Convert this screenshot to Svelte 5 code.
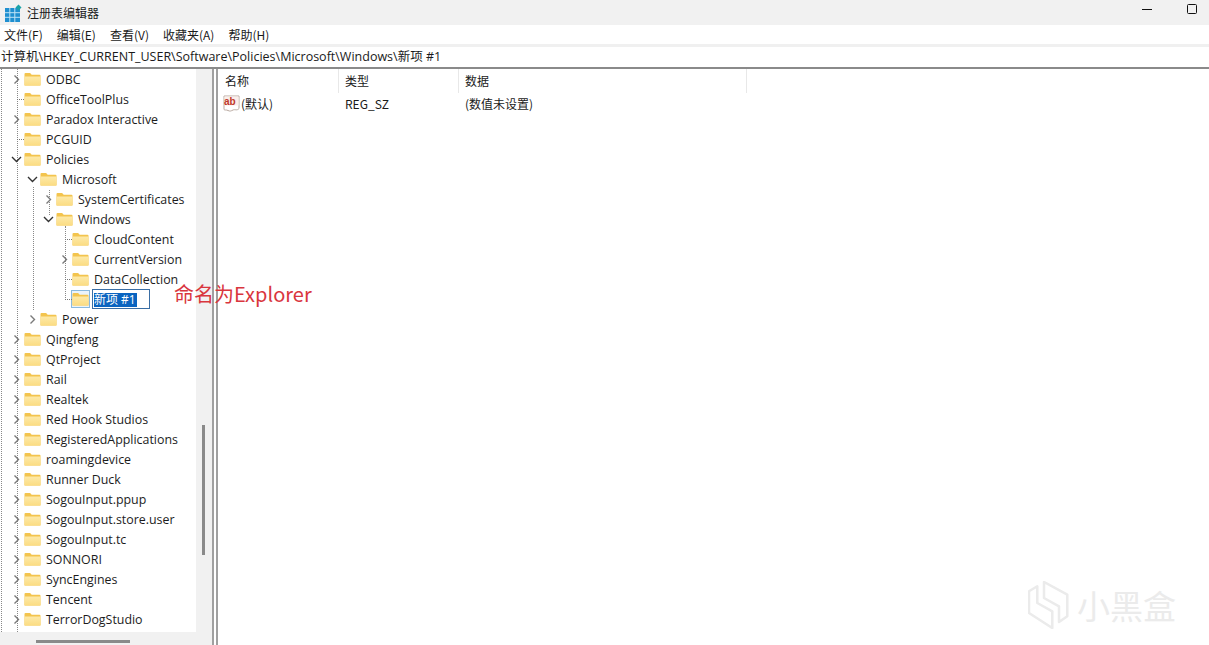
<script>
  const rows = [
    { t: 'ODBC', d: 0, e: 'c' },
    { t: 'OfficeToolPlus', d: 0 },
    { t: 'Paradox Interactive', d: 0, e: 'c' },
    { t: 'PCGUID', d: 0 },
    { t: 'Policies', d: 0, e: 'o' },
    { t: 'Microsoft', d: 1, e: 'o' },
    { t: 'SystemCertificates', d: 2, e: 'c' },
    { t: 'Windows', d: 2, e: 'o' },
    { t: 'CloudContent', d: 3 },
    { t: 'CurrentVersion', d: 3, e: 'c' },
    { t: 'DataCollection', d: 3 },
    { t: '新项 #1', d: 3, edit: true },
    { t: 'Power', d: 1, e: 'c' },
    { t: 'Qingfeng', d: 0, e: 'c' },
    { t: 'QtProject', d: 0, e: 'c' },
    { t: 'Rail', d: 0, e: 'c' },
    { t: 'Realtek', d: 0, e: 'c' },
    { t: 'Red Hook Studios', d: 0, e: 'c' },
    { t: 'RegisteredApplications', d: 0, e: 'c' },
    { t: 'roamingdevice', d: 0, e: 'c' },
    { t: 'Runner Duck', d: 0, e: 'c' },
    { t: 'SogouInput.ppup', d: 0, e: 'c' },
    { t: 'SogouInput.store.user', d: 0, e: 'c' },
    { t: 'SogouInput.tc', d: 0, e: 'c' },
    { t: 'SONNORI', d: 0, e: 'c' },
    { t: 'SyncEngines', d: 0, e: 'c' },
    { t: 'Tencent', d: 0, e: 'c' },
    { t: 'TerrorDogStudio', d: 0, e: 'c' }
  ];
  const menus = ['文件(F)', '编辑(E)', '查看(V)', '收藏夹(A)', '帮助(H)'];
</script>

<div class="win">
  <header class="title">
    <svg class="logo" width="18" height="18" viewBox="0 0 18 18">
      <rect x="1" y="4" width="15" height="14" fill="#1f8fd0" />
      <path d="M1 8.7h15M1 13.3h15M5.8 4v14M10.8 4v14" stroke="#bfe3f5" stroke-width="1" />
      <path d="M14.5 0.5l3 3-3 3-3-3z" fill="#1aa3a8" />
    </svg>
    <span class="title-text">注册表编辑器</span>
    <div class="controls">
      <svg width="12" height="12" viewBox="0 0 12 12"><path d="M0 6.500h10" stroke="#111" stroke-width="1" /></svg>
      <svg width="12" height="12" viewBox="0 0 12 12"><rect x="1.5" y="1.5" width="9" height="9" rx="1" fill="none" stroke="#111" stroke-width="1" /></svg>
    </div>
  </header>
  <nav class="menu">
    {#each menus as m}<span>{m}</span>{/each}
  </nav>
  <div class="addr">计算机\HKEY_CURRENT_USER\Software\Policies\Microsoft\Windows\新项 #1</div>
  <div class="main">
    <aside class="tree">
      <i class="g g00"></i><i class="g g0"></i><i class="g g1"></i><i class="g g2"></i><i class="g g3"></i>
      <div class="rows">
        {#each rows as r}
          <div class="row" style="padding-left:{r.d * 16}px">
            <span class="exp">
              {#if r.e === 'c'}
                <svg width="9" height="11" viewBox="0 0 9 11"><path d="M2.5 1.5l4 4-4 4" fill="none" stroke="#7a7a7a" stroke-width="1.4" /></svg>
              {:else if r.e === 'o'}
                <svg class="open" width="11" height="9" viewBox="0 0 11 9"><path d="M1 2l4.5 4.5L10 2" fill="none" stroke="#333" stroke-width="1.4" /></svg>
              {:else}
                <i class="dash"></i>
              {/if}
            </span>
            <span class="folder" class:sel={r.edit}>
              <svg width="17" height="14" viewBox="0 0 17 14">
                <defs>
                  <linearGradient id="fb" x1="0" y1="0" x2="0" y2="1">
                    <stop offset="0" stop-color="#fde9a8" />
                    <stop offset="1" stop-color="#fbdc82" />
                  </linearGradient>
                </defs>
                <path d="M0.5 2a1 1 0 0 1 1-1h4.6l1.6 1.8h7.8a1 1 0 0 1 1 1V13a.6.6 0 0 1-.6.6H1.1A.6.6 0 0 1 .5 13z" fill="#f3c44e" />
                <path d="M0.5 4.6h16V13a.6.6 0 0 1-.6.6H1.1a.6.6 0 0 1-.6-.6z" fill="url(#fb)" />
              </svg>
            </span>
            {#if r.edit}
              <span class="edit"><span class="hl">{r.t}</span></span>
            {:else}
              <span class="label">{r.t}</span>
            {/if}
          </div>
        {/each}
      </div>
      <div class="vscroll"><i></i></div>
      <div class="hscroll"><i></i></div>
    </aside>
    <div class="split"></div>
    <section class="list">
      <div class="thead">
        <span class="c1">名称</span><span class="c2">类型</span><span class="c3">数据</span>
      </div>
      <div class="trow">
        <span class="c1 name">
          <svg class="ab" width="17" height="17" viewBox="0 0 17 17">
            <path d="M1 1h15v12.5c-2 2.5-4 .5-6 1.500s-3 1.500-5 .5-3 0-4-1z" fill="#fff" stroke="#b9a9a0" />
            <rect x="1.500" y="1.500" width="14" height="9" fill="#fbeeea" />
            <text x="1" y="10" class="abt">ab</text>
          </svg>
          (默认)
        </span>
        <span class="c2">REG_SZ</span>
        <span class="c3">(数值未设置)</span>
      </div>
    </section>
  </div>
  <span class="note">命名为Explorer</span>
  <div class="mark">
    <svg width="42" height="48" viewBox="0 0 42 48" fill="none" stroke="#ebebeb" stroke-width="2.500" stroke-linejoin="round">
      <path d="M1 10.300L9.300 5.300V22L24.300 30.300V47L1 32z" />
      <path d="M16 1L39.300 13.700V35.300L31 41V25.300L16 17z" />
    </svg>
    <span>小黑盒</span>
  </div>
</div>

<style>
  :global(body) { margin: 0; background: #fff; overflow: hidden; }
  .win {
    position: relative; width: 1209px; height: 645px; overflow: hidden; background: #fff;
    display: flex; flex-direction: column;
    font-family: "Noto Sans CJK SC", "Noto Sans", sans-serif; font-size: 12px; color: #1a1a1a;
  }
  .title { height: 25px; flex: none; background: #f1f1f1; display: flex; align-items: center; }
  .logo { margin-left: 4px; }
  .title-text { margin-left: 5px; font-size: 12px; }
  .controls { margin-left: auto; display: flex; gap: 32px; margin-right: 11px; margin-top: -7px; }
  .menu { height: 19px; flex: none; display: flex; gap: 14px; padding-left: 4px; align-items: center; font-size: 12px; }
  .addr {
    border-top: 3px solid #f0f0f0; height: 20px; flex: none;
    line-height: 20px; padding-left: 1px; font-size: 12.5px; font-family: "Open Sans", "Noto Sans CJK SC", sans-serif;
    white-space: nowrap;
  }
  .main { flex: 1; min-height: 0; display: flex; border-top: 2px solid #8a8a8a; }
  .tree { position: relative; width: 212px; flex: none; background: #fff; overflow: hidden; }
  .row { height: 20px; display: flex; align-items: center; position: relative; white-space: nowrap; }
  .exp { width: 20px; margin-left: 4px; flex: none; display: flex; align-items: center; padding-left: 8px; box-sizing: border-box; position: relative; }
  .open { margin-left: -1px; }
  .dash { position: absolute; left: 13px; width: 7px; border-top: 1px dotted #777; }
  .folder { width: 17px; height: 16px; flex: none; display: flex; align-items: center; justify-content: center; }
  .folder.sel { outline: 1px solid #8ab9de; background: #eaf3fb; }
  .label { margin-left: 5px; font-family: "Open Sans", sans-serif; font-size: 12.4px; color: #1c1c1c; position: relative; }
  .edit { margin-left: 3px; border: 1px solid #3a6ea5; width: 58px; height: 20px; box-sizing: border-box; display: flex; align-items: center; padding: 1px 0 0 1px; background: #fff; }
  .hl { background: #0a64c0; color: #fff; font-size: 12px; line-height: 14px; padding-right: 1px; font-family: "Open Sans", "Noto Sans CJK SC", sans-serif; }
  .g { position: absolute; border-left: 1px dotted #888; }
  .g00 { left: 1px; top: 0; bottom: 13px; }
  .g0 { left: 17px; top: 0; bottom: 13px; }
  .g1 { left: 33px; top: 118px; height: 123px; }
  .g2 { left: 49px; top: 121px; height: 25px; }
  .g3 { left: 65px; top: 157px; height: 74px; }
  .vscroll { position: absolute; right: 0; top: 0; bottom: 0; width: 16px; background: #f1f1f1; }
  .vscroll i { position: absolute; left: 6px; top: 356px; width: 3px; height: 130px; background: #8a8a8a; }
  .hscroll { position: absolute; left: 0; right: 16px; bottom: 0; height: 13px; background: #f1f1f1; }
  .hscroll i { position: absolute; left: 36px; top: 8px; width: 94px; height: 3px; background: #8a8a8a; }
  .split { width: 6px; flex: none; background: #fff; border-left: 2px solid #a0a0a0; border-right: 2px solid #a0a0a0; box-sizing: border-box; }
  .list { flex: 1; min-width: 0; }
  .thead { display: flex; height: 24px; align-items: center; font-size: 12px; }
  .thead span { height: 24px; line-height: 24px; border-right: 1px solid #e8e8e8; box-sizing: border-box; padding-left: 7px; }
  .thead .c2, .thead .c3 { padding-left: 6px; }
  .c1 { width: 121px; flex: none; }
  .c2 { width: 120px; flex: none; }
  .c3 { width: 288px; flex: none; }
  .trow { display: flex; height: 20px; align-items: center; }
  .trow span { padding-left: 6px; box-sizing: border-box; }
  .trow .name { padding-left: 5px; display: flex; align-items: center; gap: 1px; }
  .abt { font: bold 10px "Liberation Sans", sans-serif; fill: #c0392b; }
  .note { position: absolute; left: 174px; top: 281px; font-size: 20px; line-height: 25px; color: #d9363e; }
  .mark { position: absolute; left: 1028px; top: 581px; display: flex; align-items: center; gap: 7px; color: #ebebeb; font-size: 33px; line-height: 48px; }
</style>
